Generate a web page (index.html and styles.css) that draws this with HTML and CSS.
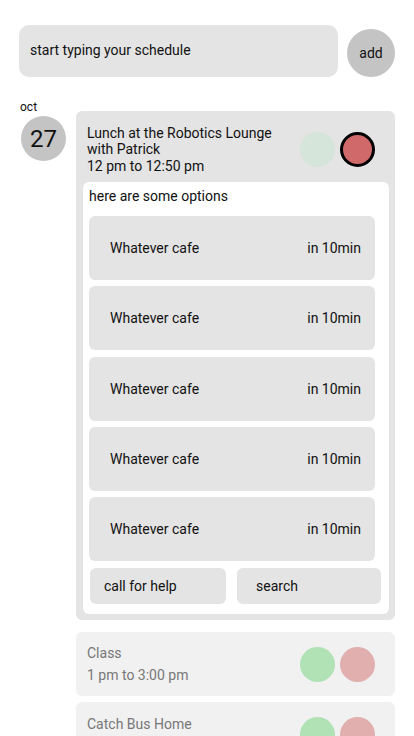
FILE: index.html
```html
<!DOCTYPE html>
<html>
<head>
<meta charset="utf-8">
<link rel="stylesheet" href="styles.css">
</head>
<body>
<div class="app">
  <div class="top">
    <div class="input">start typing your schedule</div>
    <div class="add">add</div>
  </div>
  <div class="day">
    <div class="date">
      <div class="month">oct</div>
      <div class="daynum">27</div>
    </div>
    <div class="events">
      <div class="card active">
        <div class="head">
          <div class="info">
            <div class="title">Lunch at the Robotics Lounge<br>with Patrick</div>
            <div class="time">12 pm to 12:50 pm</div>
          </div>
          <div class="dots">
            <span class="dot g-faint"></span>
            <span class="dot r-sel"></span>
          </div>
        </div>
        <div class="panel">
          <div class="panel-title">here are some options</div>
          <div class="options">
            <div class="opt"><span>Whatever cafe</span><span>in 10min</span></div>
            <div class="opt"><span>Whatever cafe</span><span>in 10min</span></div>
            <div class="opt"><span>Whatever cafe</span><span>in 10min</span></div>
            <div class="opt"><span>Whatever cafe</span><span>in 10min</span></div>
            <div class="opt"><span>Whatever cafe</span><span>in 10min</span></div>
          </div>
          <div class="actions">
            <div class="btn help">call for help</div>
            <div class="btn search">search</div>
          </div>
        </div>
      </div>
      <div class="card muted first-muted">
        <div class="info">
          <div class="m-title">Class</div>
          <div class="m-time">1 pm to 3:00 pm</div>
        </div>
        <div class="dots">
          <span class="dot g"></span>
          <span class="dot r"></span>
        </div>
      </div>
      <div class="card muted bus">
        <div class="info">
          <div class="m-title">Catch Bus Home</div>
        </div>
        <div class="dots">
          <span class="dot g"></span>
          <span class="dot r"></span>
        </div>
      </div>
    </div>
  </div>
</div>
</body>
</html>
```
FILE: styles.css
```css
* { box-sizing: border-box; }
html, body { margin: 0; padding: 0; background: #fff; }
body {
  font-family: Roboto, "Liberation Sans", sans-serif;
  font-size: 14px;
  color: #111;
  overflow: hidden;
  height: 736px;
}
.app { padding: 25px 19px 0 19px; }
.top { display: flex; align-items: flex-start; gap: 9px; }
.input {
  width: 319px; height: 52px;
  background: #e4e4e4;
  border-radius: 10px;
  padding-left: 11px;
  display: flex; align-items: center;
  padding-bottom: 3px;
}
.add {
  width: 48px; height: 48px; margin-top: 4px;
  border-radius: 50%;
  background: #c4c4c4;
  display: flex; align-items: center; justify-content: center;
}
.day { display: flex; margin-top: 23px; }
.date { width: 57px; padding-left: 1px; }
.month { font-size: 12px; line-height: 14px; }
.daynum {
  width: 45px; height: 45px; margin-top: 2px; margin-left: 1px;
  border-radius: 50%; background: #c4c4c4;
  display: flex; align-items: center; justify-content: center;
  font-size: 24px;
}
.events { margin-top: 11px; width: 319px; }
.card { border-radius: 6px; }
.active { background: #e4e4e4; padding: 14px 6px 6px 7px; }
.head { display: flex; justify-content: space-between; align-items: flex-start; padding-left: 4px; padding-right: 14px; }
.title { line-height: 16px; }
.time { line-height: 17px; margin-top: 1px; }
.dots { display: flex; gap: 5px; }
.head .dots { margin-top: 7px; }
.dot { width: 35px; height: 35px; border-radius: 50%; display: block; }
.g-faint { background: #d6e5d9; }
.r-sel { background: #d06a6a; border: 3px solid #000; }
.g { background: #b0e2b6; }
.r { background: #e2afaf; }
.panel {
  background: #fff; border-radius: 6px;
  margin-top: 7px;
  padding: 6px 14px 10px 6px;
}
.panel-title { line-height: 16px; }
.options { display: flex; flex-direction: column; gap: 6.25px; margin-top: 12px; }
.opt {
  height: 64px; background: #e4e4e4; border-radius: 6px;
  display: flex; justify-content: space-between; align-items: center;
  padding: 0 14px 0 21px;
}
.actions { display: flex; gap: 11px; margin-top: 7px; margin-left: 1px; margin-right: -8px; }
.btn {
  height: 36px; background: #e4e4e4; border-radius: 6px;
  display: flex; align-items: center; flex-shrink: 0;
}
.help { width: 136px; padding-left: 14px; }
.search { width: 144px; padding-left: 19px; }
.muted {
  background: #f1f1f1; color: #777;
  display: flex; justify-content: space-between; align-items: center;
  height: 64px; padding: 0 20px 0 11px;
  margin-top: 6px;
}
.bus { align-items: flex-start; padding-top: 12px; }
.bus .dots { margin-top: 3px; }
.first-muted { margin-top: 12px; }
.m-title { line-height: 20px; }
.m-time { line-height: 20px; margin-top: 2px; }
```
